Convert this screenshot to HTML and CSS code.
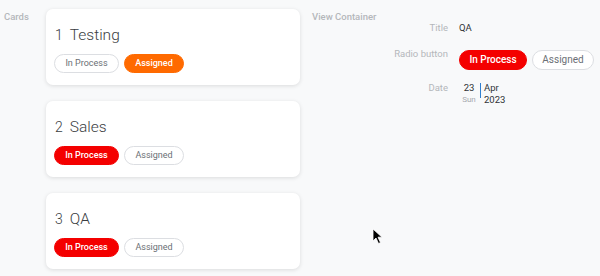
FILE: index.html
```html
<!DOCTYPE html>
<html>
<head>
<meta charset="utf-8">
<link rel="stylesheet" href="styles.css">
</head>
<body>
<div class="page">
  <div class="section-label cards-label">Cards</div>
  <div class="cards">
    <div class="card">
      <div class="card-title"><span class="num">1</span><span class="name">Testing</span></div>
      <div class="pills">
        <span class="pill">In Process</span>
        <span class="pill active-orange">Assigned</span>
      </div>
    </div>
    <div class="card">
      <div class="card-title"><span class="num">2</span><span class="name">Sales</span></div>
      <div class="pills">
        <span class="pill active-red">In Process</span>
        <span class="pill">Assigned</span>
      </div>
    </div>
    <div class="card">
      <div class="card-title"><span class="num">3</span><span class="name">QA</span></div>
      <div class="pills">
        <span class="pill active-red">In Process</span>
        <span class="pill">Assigned</span>
      </div>
    </div>
  </div>
  <div class="view">
    <div class="section-label">View Container</div>
    <div class="fields">
      <div class="field-label label-title">Title</div>
      <div class="field-value value-title">QA</div>
      <div class="field-label label-radio">Radio button</div>
      <div class="field-value pills big">
        <span class="pill active-red">In Process</span>
        <span class="pill">Assigned</span>
      </div>
      <div class="field-label label-date">Date</div>
      <div class="field-value date">
        <div class="day"><span class="dnum">23</span><span class="dname">Sun</span></div>
        <div class="sep"></div>
        <div class="my"><span>Apr</span><span>2023</span></div>
      </div>
    </div>
  </div>
</div>
<svg class="cursor" width="12" height="17" viewBox="0 0 12 17">
  <path d="M1 1 L1 13 L4 10 L6.5 15.5 L8.5 14.6 L6 9.2 L10 9.2 Z" fill="#000" stroke="#fff" stroke-width="0.8"/>
</svg>
</body>
</html>
```
FILE: styles.css
```css
html, body {
  margin: 0;
  padding: 0;
}
body {
  background: #f8f9fa;
  font-family: Roboto, "Liberation Sans", sans-serif;
  width: 600px;
  height: 276px;
  overflow: hidden;
  position: relative;
}
.page {
  display: flex;
  align-items: flex-start;
  padding: 9px 0 0 4px;
}
.section-label {
  font-size: 9.5px;
  color: #b4b7bb;
  font-weight: 500;
  line-height: 12px;
}
.cards-label {
  width: 42px;
  padding-top: 2px;
}
.cards {
  display: flex;
  flex-direction: column;
  gap: 16px;
  width: 254px;
}
.card {
  background: #fff;
  border-radius: 7px;
  box-shadow: 0 1px 4px rgba(0, 0, 0, 0.12);
  padding: 16px 8px 12px 8px;
  height: 48px;
}
.card-title {
  display: flex;
  align-items: baseline;
  height: 20px;
  line-height: 20px;
  color: #3a3d42;
  padding-left: 1px;
}
.num {
  font-size: 14px;
  font-weight: 300;
  margin-right: 7px;
}
.name {
  font-size: 15.5px;
  font-weight: 300;
}
.pills {
  display: flex;
  gap: 5px;
  margin-top: 9px;
}
.pill {
  box-sizing: border-box;
  height: 19px;
  line-height: 17px;
  border: 1px solid #dcdee2;
  border-radius: 10px;
  font-size: 9px;
  color: #6b6f75;
  background: #fff;
  padding: 0;
  text-align: center;
  white-space: nowrap;
}
.pills .pill:first-child { width: 65px; }
.pills .pill:last-child { width: 60px; }
.active-red {
  background: #f40000;
  border-color: #f40000;
  color: #fff;
  font-weight: 500;
}
.active-orange {
  background: #ff6a00;
  border-color: #ff6a00;
  color: #fff;
  font-weight: 500;
}
.view {
  margin-left: 12px;
  width: 288px;
  margin-top: 2px;
}
.fields {
  display: grid;
  grid-template-columns: 136px auto;
  column-gap: 11px;
  margin-top: -1px;
}
.field-label {
  text-align: right;
  font-size: 9.5px;
  color: #b4b7bb;
  line-height: 12px;
}
.field-value {
  font-size: 9.5px;
  color: #2f3236;
  line-height: 12px;
}
.label-radio { margin-top: 14px; }
.fields .big {
  margin-top: 16px;
}
.fields .big .pill {
  font-size: 10px;
  height: 20px;
  line-height: 18px;
}
.fields .big .pill:first-child { width: 68px; }
.fields .big .pill:last-child { width: 62px; }
.label-date { margin-top: 12px; }
.date {
  margin-top: 12px;
  display: flex;
  align-items: flex-start;
  padding-left: 3px;
}
.day {
  display: flex;
  flex-direction: column;
  align-items: center;
  width: 14px;
}
.dnum {
  font-size: 9.5px;
  line-height: 12px;
}
.dname {
  font-size: 8px;
  color: #a6a9ae;
  line-height: 12px;
}
.sep {
  width: 1px;
  height: 15px;
  background: #2f7fd0;
  margin: 1px 3px 0 4px;
}
.my {
  display: flex;
  flex-direction: column;
  line-height: 12px;
}
.cursor {
  position: absolute;
  left: 372px;
  top: 228px;
}
```
